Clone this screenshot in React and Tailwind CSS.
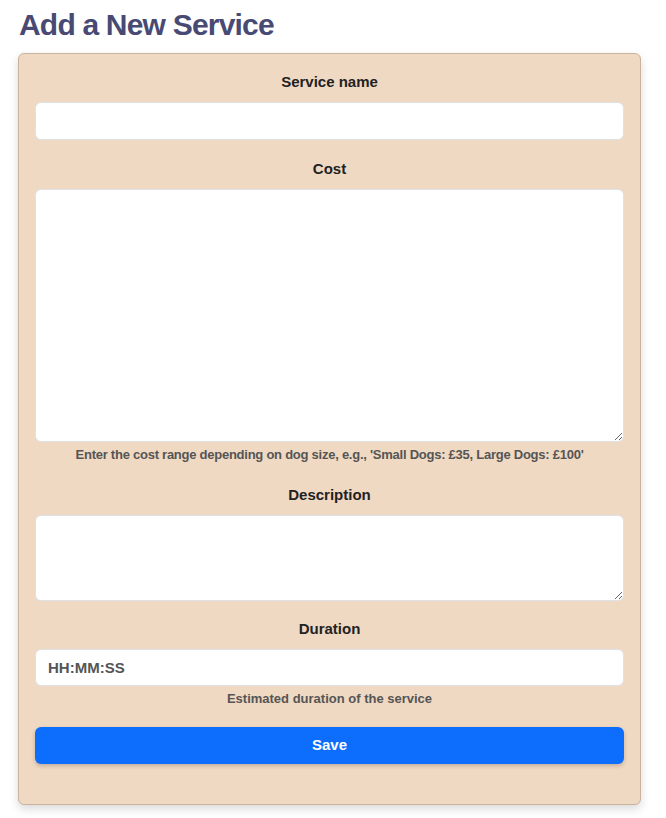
export default function App() {
  const font = { fontFamily: '"Liberation Sans", Arial, sans-serif' };

  return (
    <div className="min-h-screen bg-white pl-[18px] pr-[25px] pt-[7px]" style={font}>
      <h1 className="mb-[10px] ml-px text-[30px] font-bold leading-[36px] tracking-[-0.8px] text-[#484a74]">
        Add a New Service
      </h1>

      <form className="rounded-md border border-[#c9b39d] bg-[#f0d9c2] px-[16px] pt-[17px] pb-[40px] shadow-[0_4px_10px_rgba(0,0,0,0.15)]">
        <label className="mb-[9px] block text-center text-[15px] font-bold leading-[22px] text-[#222]">
          Service name
        </label>
        <input
          type="text"
          className="block h-[38px] w-full rounded-md border border-[#dee2e6] bg-white px-3 text-[15px]"
        />

        <label className="mt-[18px] mb-[9px] block text-center text-[15px] font-bold leading-[22px] text-[#222]">
          Cost
        </label>
        <textarea className="block h-[253px] w-full rounded-md border border-[#dee2e6] bg-white px-3 py-2 text-[15px]" />
        <p className="mt-[4px] text-center text-[13px] font-bold leading-[18px] tracking-[-0.25px] text-[#555]">
          Enter the cost range depending on dog size, e.g., 'Small Dogs: £35, Large Dogs: £100'
        </p>

        <label className="mt-[20px] mb-[9px] block text-center text-[15px] font-bold leading-[22px] text-[#222]">
          Description
        </label>
        <textarea className="block h-[86px] w-full rounded-md border border-[#dee2e6] bg-white px-3 py-2 text-[15px]" />

        <label className="mt-[17px] mb-[9px] block text-center text-[15px] font-bold leading-[22px] text-[#222]">
          Duration
        </label>
        <input
          type="text"
          placeholder="HH:MM:SS"
          className="block h-[37px] w-full rounded-md border border-[#dee2e6] bg-white px-3 text-[15px] font-bold text-[#555] placeholder:text-[#555]"
        />
        <p className="mt-[4px] text-center text-[13px] font-bold leading-[18px] text-[#555]">
          Estimated duration of the service
        </p>

        <button
          type="button"
          className="mt-[19px] block h-[37px] w-full rounded-md bg-[#0d6efd] text-[15px] font-bold text-white shadow-[0_2px_4px_rgba(0,0,0,0.2)]"
        >
          Save
        </button>
      </form>
    </div>
  );
}
